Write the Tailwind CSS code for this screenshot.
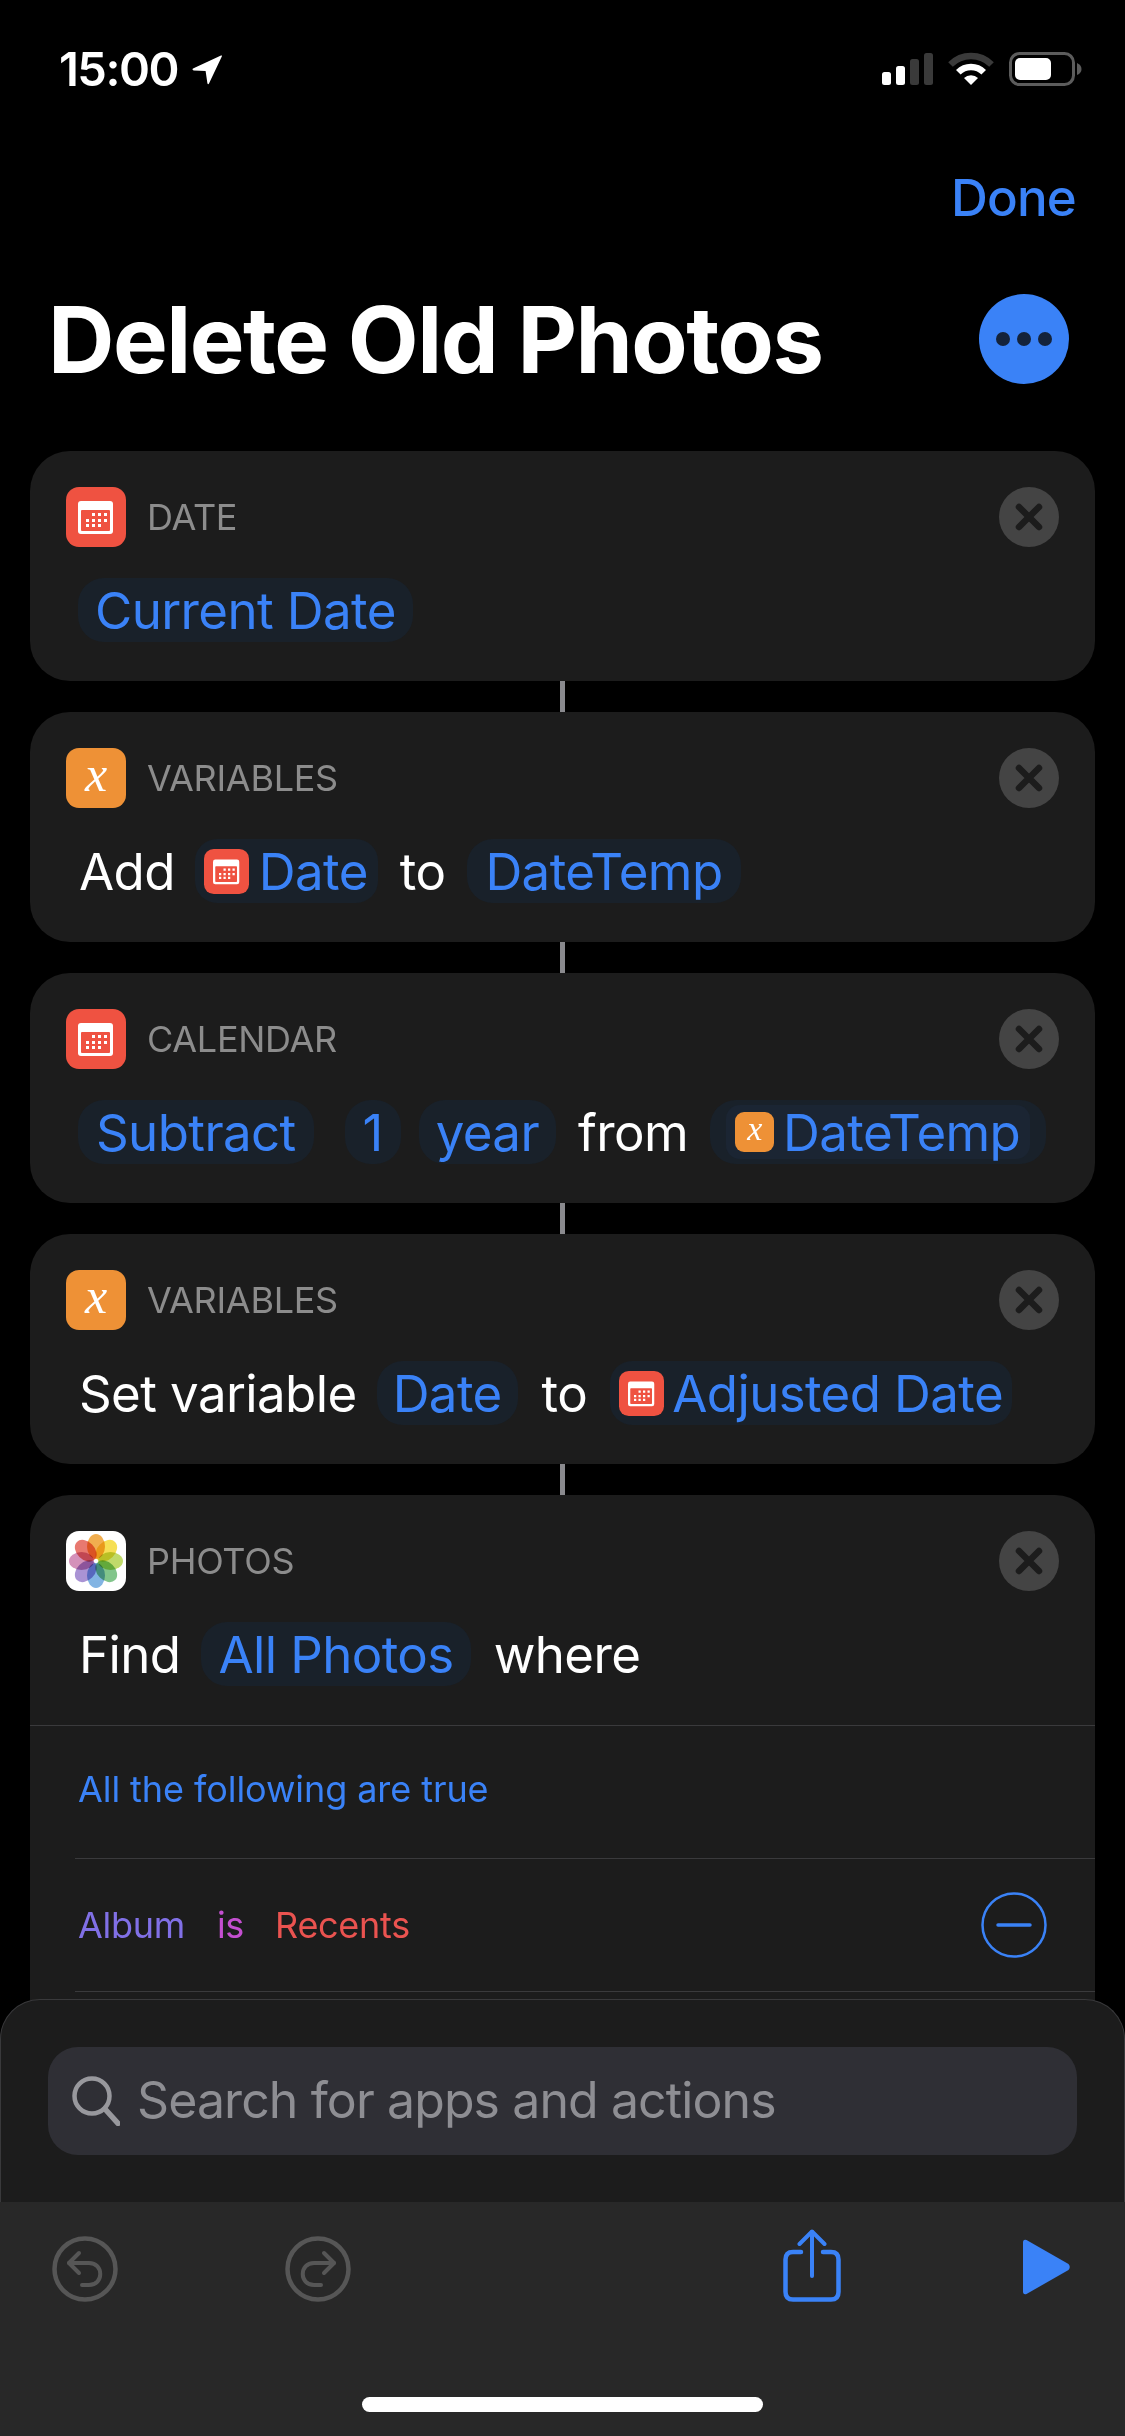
<!DOCTYPE html>
<html>
<head>
<meta charset="utf-8">
<script src="https://cdn.jsdelivr.net/npm/@tailwindcss/browser@4"></script>
</head>
<body class="bg-black">
<svg class="hidden" width="0" height="0">
  <symbol id="cal" viewBox="0 0 60 60">
    <rect width="60" height="60" rx="13" fill="#ef5241"/>
    <rect x="12" y="14" width="35" height="33" rx="3" fill="#fff"/>
    <rect x="15" y="23" width="29" height="21" rx="1" fill="#ef5241"/>
    <g fill="#fff">
      <rect x="26" y="26" width="3" height="3"/><rect x="32" y="26" width="3" height="3"/><rect x="38" y="26" width="3" height="3"/>
      <rect x="20" y="32" width="3" height="3"/><rect x="26" y="32" width="3" height="3"/><rect x="32" y="32" width="3" height="3"/><rect x="38" y="32" width="3" height="3"/>
      <rect x="20" y="37" width="3" height="3"/><rect x="26" y="37" width="3" height="3"/><rect x="32" y="37" width="3" height="3"/>
    </g>
  </symbol>
  <symbol id="closex" viewBox="0 0 60 60">
    <circle cx="30" cy="30" r="30" fill="#444444"/>
    <path d="M20 20 L40 40 M40 20 L20 40" stroke="#1c1c1c" stroke-width="6.5" stroke-linecap="round"/>
  </symbol>
</svg>

<div class="relative w-[1125px] h-[2436px] overflow-hidden bg-black text-white font-['Inter','Liberation_Sans',sans-serif]">

  <!-- status bar -->
  <div class="h-[137px] flex items-start justify-between pt-[52px] pl-[59px] pr-[43px]">
    <div class="flex items-center gap-[14px] h-[34px]">
      <span class="text-[47px] leading-[34px] font-semibold tracking-[-1.5px]">15:00</span>
      <svg width="31" height="31" viewBox="0 0 31 31"><path d="M1 14.5 L29 1.5 Q30.5 1 29.8 2.6 L17 29.5 Q16 31 15.4 29.2 L13.6 17 L1.6 16.5 Q-0.4 15.6 1 14.5Z" fill="#fff"/></svg>
    </div>
    <div class="flex items-start gap-[15px]">
      <svg width="51" height="33" viewBox="0 0 51 33">
        <rect x="0" y="20" width="9" height="13" rx="2.5" fill="#fff"/>
        <rect x="14" y="14" width="9" height="19" rx="2.5" fill="#fff"/>
        <rect x="28" y="7" width="9" height="26" rx="2.5" fill="#3a3a3a"/>
        <rect x="42" y="1" width="9" height="32" rx="2.5" fill="#3a3a3a"/>
      </svg>
      <svg width="46" height="33" viewBox="0 0 46 33" fill="none">
        <path d="M2.5 12.5 A29 29 0 0 1 43.5 12.5" stroke="#3a3a3a" stroke-width="6.5"/>
        <path d="M10.3 20.3 A18 18 0 0 1 35.7 20.3" stroke="#fff" stroke-width="6.5"/>
        <path d="M23 33 L16 26 A10 10 0 0 1 30 26 Z" fill="#fff"/>
      </svg>
      <svg width="73" height="34" viewBox="0 0 73 34">
        <rect x="1.5" y="1.5" width="63" height="31" rx="9" fill="none" stroke="#5c5c5c" stroke-width="3"/>
        <rect x="6" y="6" width="36" height="22" rx="5" fill="#fff"/>
        <path d="M68 11 Q72.5 13 72.5 17 Q72.5 21 68 23Z" fill="#5c5c5c"/>
      </svg>
    </div>
  </div>

  <!-- nav -->
  <div class="h-[66px] mt-[27px] flex items-center justify-end pr-[49px]">
    <span class="text-[51px] leading-none font-medium text-[#3a82f7] tracking-[-0.8px]">Done</span>
  </div>

  <!-- title -->
  <div class="h-[90px] mt-[64px] flex items-center justify-between pl-[48px] pr-[56px]">
    <h1 class="text-[92px] leading-none font-bold tracking-[-1.5px] pt-[2px]">Delete Old Photos</h1>
    <div class="w-[90px] h-[90px] rounded-full bg-[#3a82f7] flex items-center justify-center gap-[7px]">
      <span class="w-[14px] h-[14px] rounded-full bg-[#14233b]"></span>
      <span class="w-[14px] h-[14px] rounded-full bg-[#14233b]"></span>
      <span class="w-[14px] h-[14px] rounded-full bg-[#14233b]"></span>
    </div>
  </div>

  <!-- cards -->
  <div class="mt-[67px] px-[30px] flex flex-col items-stretch">

    <div class="h-[230px] rounded-[40px] bg-[#1c1c1c] pt-[36px]">
      <div class="h-[60px] px-[36px] flex items-center">
        <svg width="60" height="60"><use href="#cal"/></svg>
        <span class="ml-[21px] text-[36px] leading-none text-[#8c8c8c] tracking-[-0.3px]">DATE</span>
        <svg class="ml-auto" width="60" height="60"><use href="#closex"/></svg>
      </div>
      <div class="mt-[31px] pl-[48px] h-[64px] flex items-center text-[51px] leading-none tracking-[-0.6px]">
        <span class="h-[64px] pl-[17px] pr-[17px] rounded-[26px] bg-[#19212a] text-[#3a82f7] flex items-center">Current Date</span>
      </div>
    </div>

    <div class="w-[5px] h-[31px] bg-[#8a8a8e] self-center"></div>

    <div class="h-[230px] rounded-[40px] bg-[#1c1c1c] pt-[36px]">
      <div class="h-[60px] px-[36px] flex items-center">
        <div class="w-[60px] h-[60px] pb-[8px] rounded-[13px] bg-[#ee9136] flex items-center justify-center font-['Liberation_Serif',serif] italic text-[50px] leading-none">x</div>
        <span class="ml-[21px] text-[36px] leading-none text-[#8c8c8c] tracking-[-0.3px]">VARIABLES</span>
        <svg class="ml-auto" width="60" height="60"><use href="#closex"/></svg>
      </div>
      <div class="mt-[31px] pl-[49px] h-[64px] flex items-center text-[51px] leading-none tracking-[-0.6px]">
        <span>Add</span>
        <span class="ml-[20px] h-[64px] pl-[9px] pr-[10px] rounded-[22px] bg-[#19212a] text-[#3a82f7] flex items-center gap-[10px]">
          <svg width="45" height="45"><use href="#cal"/></svg>Date
        </span>
        <span class="ml-[22px]">to</span>
        <span class="ml-[22px] h-[64px] px-[18px] rounded-[26px] bg-[#19212a] text-[#3a82f7] flex items-center">DateTemp</span>
      </div>
    </div>

    <div class="w-[5px] h-[31px] bg-[#8a8a8e] self-center"></div>

    <div class="h-[230px] rounded-[40px] bg-[#1c1c1c] pt-[36px]">
      <div class="h-[60px] px-[36px] flex items-center">
        <svg width="60" height="60"><use href="#cal"/></svg>
        <span class="ml-[21px] text-[36px] leading-none text-[#8c8c8c] tracking-[-0.3px]">CALENDAR</span>
        <svg class="ml-auto" width="60" height="60"><use href="#closex"/></svg>
      </div>
      <div class="mt-[31px] pl-[48px] h-[64px] flex items-center text-[51px] leading-none tracking-[-0.6px]">
        <span class="h-[64px] px-[18px] rounded-[26px] bg-[#19212a] text-[#3a82f7] flex items-center">Subtract</span>
        <span class="ml-[31px] w-[56px] justify-center h-[64px] rounded-[26px] bg-[#19212a] text-[#3a82f7] flex items-center">1</span>
        <span class="ml-[18px] h-[64px] px-[17px] rounded-[26px] bg-[#19212a] text-[#3a82f7] flex items-center">year</span>
        <span class="ml-[22px]">from</span>
        <span class="ml-[22px] h-[64px] px-[16px] rounded-[26px] bg-[#19212a] flex items-center">
          <span class="h-[54px] pl-[9px] pr-[10px] rounded-[14px] bg-[#1b2533] text-[#3a82f7] flex items-center gap-[9px]">
            <span class="w-[39px] h-[40px] pb-[6px] rounded-[9px] bg-[#ee9136] text-white flex items-center justify-center font-['Liberation_Serif',serif] italic text-[34px] leading-none">x</span>DateTemp
          </span>
        </span>
      </div>
    </div>

    <div class="w-[5px] h-[31px] bg-[#8a8a8e] self-center"></div>

    <div class="h-[230px] rounded-[40px] bg-[#1c1c1c] pt-[36px]">
      <div class="h-[60px] px-[36px] flex items-center">
        <div class="w-[60px] h-[60px] pb-[8px] rounded-[13px] bg-[#ee9136] flex items-center justify-center font-['Liberation_Serif',serif] italic text-[50px] leading-none">x</div>
        <span class="ml-[21px] text-[36px] leading-none text-[#8c8c8c] tracking-[-0.3px]">VARIABLES</span>
        <svg class="ml-auto" width="60" height="60"><use href="#closex"/></svg>
      </div>
      <div class="mt-[31px] pl-[49px] h-[64px] flex items-center text-[51px] leading-none tracking-[-0.6px]">
        <span>Set variable</span>
        <span class="ml-[20px] h-[64px] px-[16px] rounded-[26px] bg-[#19212a] text-[#3a82f7] flex items-center">Date</span>
        <span class="ml-[24px]">to</span>
        <span class="ml-[23px] h-[64px] pl-[9px] pr-[9px] rounded-[22px] bg-[#19212a] text-[#3a82f7] flex items-center gap-[8px]">
          <svg width="45" height="45"><use href="#cal"/></svg>Adjusted Date
        </span>
      </div>
    </div>

    <div class="w-[5px] h-[31px] bg-[#8a8a8e] self-center"></div>

    <div class="rounded-t-[40px] bg-[#1c1c1c] pt-[36px] h-[560px]">
      <div class="h-[60px] px-[36px] flex items-center">
        <svg width="60" height="60" viewBox="0 0 60 60">
          <rect width="60" height="60" rx="13" fill="#fff"/>
          <g class="isolate">
            <ellipse class="mix-blend-multiply" cx="30" cy="15.5" rx="9" ry="12.5" fill="#f0a53c" fill-opacity=".9"/>
            <ellipse class="mix-blend-multiply" cx="30" cy="15.5" rx="9" ry="12.5" fill="#f5dc42" fill-opacity=".9" transform="rotate(45 30 30)"/>
            <ellipse class="mix-blend-multiply" cx="30" cy="15.5" rx="9" ry="12.5" fill="#b9d65a" fill-opacity=".9" transform="rotate(90 30 30)"/>
            <ellipse class="mix-blend-multiply" cx="30" cy="15.5" rx="9" ry="12.5" fill="#74bf7e" fill-opacity=".9" transform="rotate(135 30 30)"/>
            <ellipse class="mix-blend-multiply" cx="30" cy="15.5" rx="9" ry="12.5" fill="#74ace0" fill-opacity=".9" transform="rotate(180 30 30)"/>
            <ellipse class="mix-blend-multiply" cx="30" cy="15.5" rx="9" ry="12.5" fill="#a087cf" fill-opacity=".9" transform="rotate(225 30 30)"/>
            <ellipse class="mix-blend-multiply" cx="30" cy="15.5" rx="9" ry="12.5" fill="#cf85b2" fill-opacity=".9" transform="rotate(270 30 30)"/>
            <ellipse class="mix-blend-multiply" cx="30" cy="15.5" rx="9" ry="12.5" fill="#e66a60" fill-opacity=".9" transform="rotate(315 30 30)"/>
          </g>
          <circle cx="30" cy="30" r="1.6" fill="#fff"/>
        </svg>
        <span class="ml-[21px] text-[36px] leading-none text-[#8c8c8c] tracking-[-0.3px]">PHOTOS</span>
        <svg class="ml-auto" width="60" height="60"><use href="#closex"/></svg>
      </div>
      <div class="mt-[31px] pl-[49px] h-[64px] flex items-center text-[51px] leading-none tracking-[-0.6px]">
        <span>Find</span>
        <span class="ml-[21px] h-[64px] px-[17px] rounded-[26px] bg-[#19212a] text-[#3a82f7] flex items-center">All Photos</span>
        <span class="ml-[23px]">where</span>
      </div>
      <div class="mt-[39px] h-[133px] pb-[6px] border-t border-[#3a3a3c] flex items-center pl-[48px] text-[36px] leading-none text-[#3a82f7] tracking-[-0.07px]">All the following are true</div>
      <div class="ml-[45px] h-[133px] border-t border-[#3a3a3c] flex items-center pl-[3px] pr-[48px] text-[36px] leading-none tracking-[-0.3px]">
        <span class="text-[#8170e6]">Album</span>
        <span class="ml-[32px] text-[#c44fd0]">is</span>
        <span class="ml-[31px] text-[#ea5350]">Recents</span>
        <svg class="ml-auto" width="66" height="66" viewBox="0 0 66 66" fill="none">
          <circle cx="33" cy="33" r="31.5" stroke="#3a82f7" stroke-width="2.5"/>
          <path d="M17 33 H49" stroke="#3a82f7" stroke-width="3.5" stroke-linecap="round"/>
        </svg>
      </div>
      <div class="ml-[45px] border-t border-[#3a3a3c]"></div>
    </div>
  </div>

  <!-- bottom panel -->
  <div class="absolute left-0 right-0 bottom-0 flex flex-col">
    <div class="h-[203px] rounded-t-[40px] bg-[#1c1c1c] border-x border-t border-[#39393b] pt-[47px] px-[47px]">
      <div class="h-[108px] rounded-[30px] bg-[#2f2f35] flex items-center pl-[24px] gap-[17px]">
        <svg width="48" height="50" viewBox="0 0 48 50" fill="none">
          <circle cx="20" cy="20" r="17.5" stroke="#98989d" stroke-width="4.5"/>
          <path d="M33 33 L46 47.5" stroke="#98989d" stroke-width="5.5" stroke-linecap="round"/>
        </svg>
        <span class="text-[50px] leading-none text-[#8e8e93] tracking-[-0.9px] pb-[3px]">Search for apps and actions</span>
      </div>
    </div>
    <div class="relative h-[234px] bg-[#282828] pt-[27px] pl-[52px] pr-[54px] flex items-start">
      <svg class="mt-[7px]" width="66" height="66" viewBox="0 0 66 66" fill="none" stroke="#565656" stroke-linecap="round" stroke-linejoin="round">
        <circle cx="33" cy="33" r="30.5" stroke-width="4.5"/>
        <path d="M27 17 L17 27 L27 37" stroke-width="4"/>
        <path d="M17 27 H37 C52 27 52 49 37 49 H30" stroke-width="4"/>
      </svg>
      <svg class="ml-[167px] mt-[7px]" width="66" height="66" viewBox="0 0 66 66" fill="none" stroke="#565656" stroke-linecap="round" stroke-linejoin="round">
        <circle cx="33" cy="33" r="30.5" stroke-width="4.5"/>
        <path d="M39 17 L49 27 L39 37" stroke-width="4"/>
        <path d="M49 27 H29 C14 27 14 49 29 49 H36" stroke-width="4"/>
      </svg>
      <svg class="ml-[432px]" width="58" height="74" viewBox="0 0 58 74" fill="none" stroke="#3a82f7" stroke-linecap="round" stroke-linejoin="round">
        <path d="M18 23 H10 Q2.5 23 2.5 30.5 V63 Q2.5 70.5 10 70.5 H48 Q55.5 70.5 55.5 63 V30.500 Q55.5 23 48 23 H40" stroke-width="4.5"/>
        <path d="M29 47 V3" stroke-width="4"/>
        <path d="M16.5 15 L29 2.5 L41.5 15" stroke-width="4"/>
      </svg>
      <svg class="ml-auto mt-[10px]" width="50" height="56" viewBox="0 0 50 56"><path d="M2 3.5 Q2 0 5.5 1 L47.5 25 Q50 28 47.5 31 L5.500 55 Q2 56 2 52.5Z" fill="#3a82f7"/></svg>
      <div class="absolute left-[362px] top-[195px] w-[401px] h-[15px] rounded-full bg-white"></div>
    </div>
  </div>
</div>
</body>
</html>
